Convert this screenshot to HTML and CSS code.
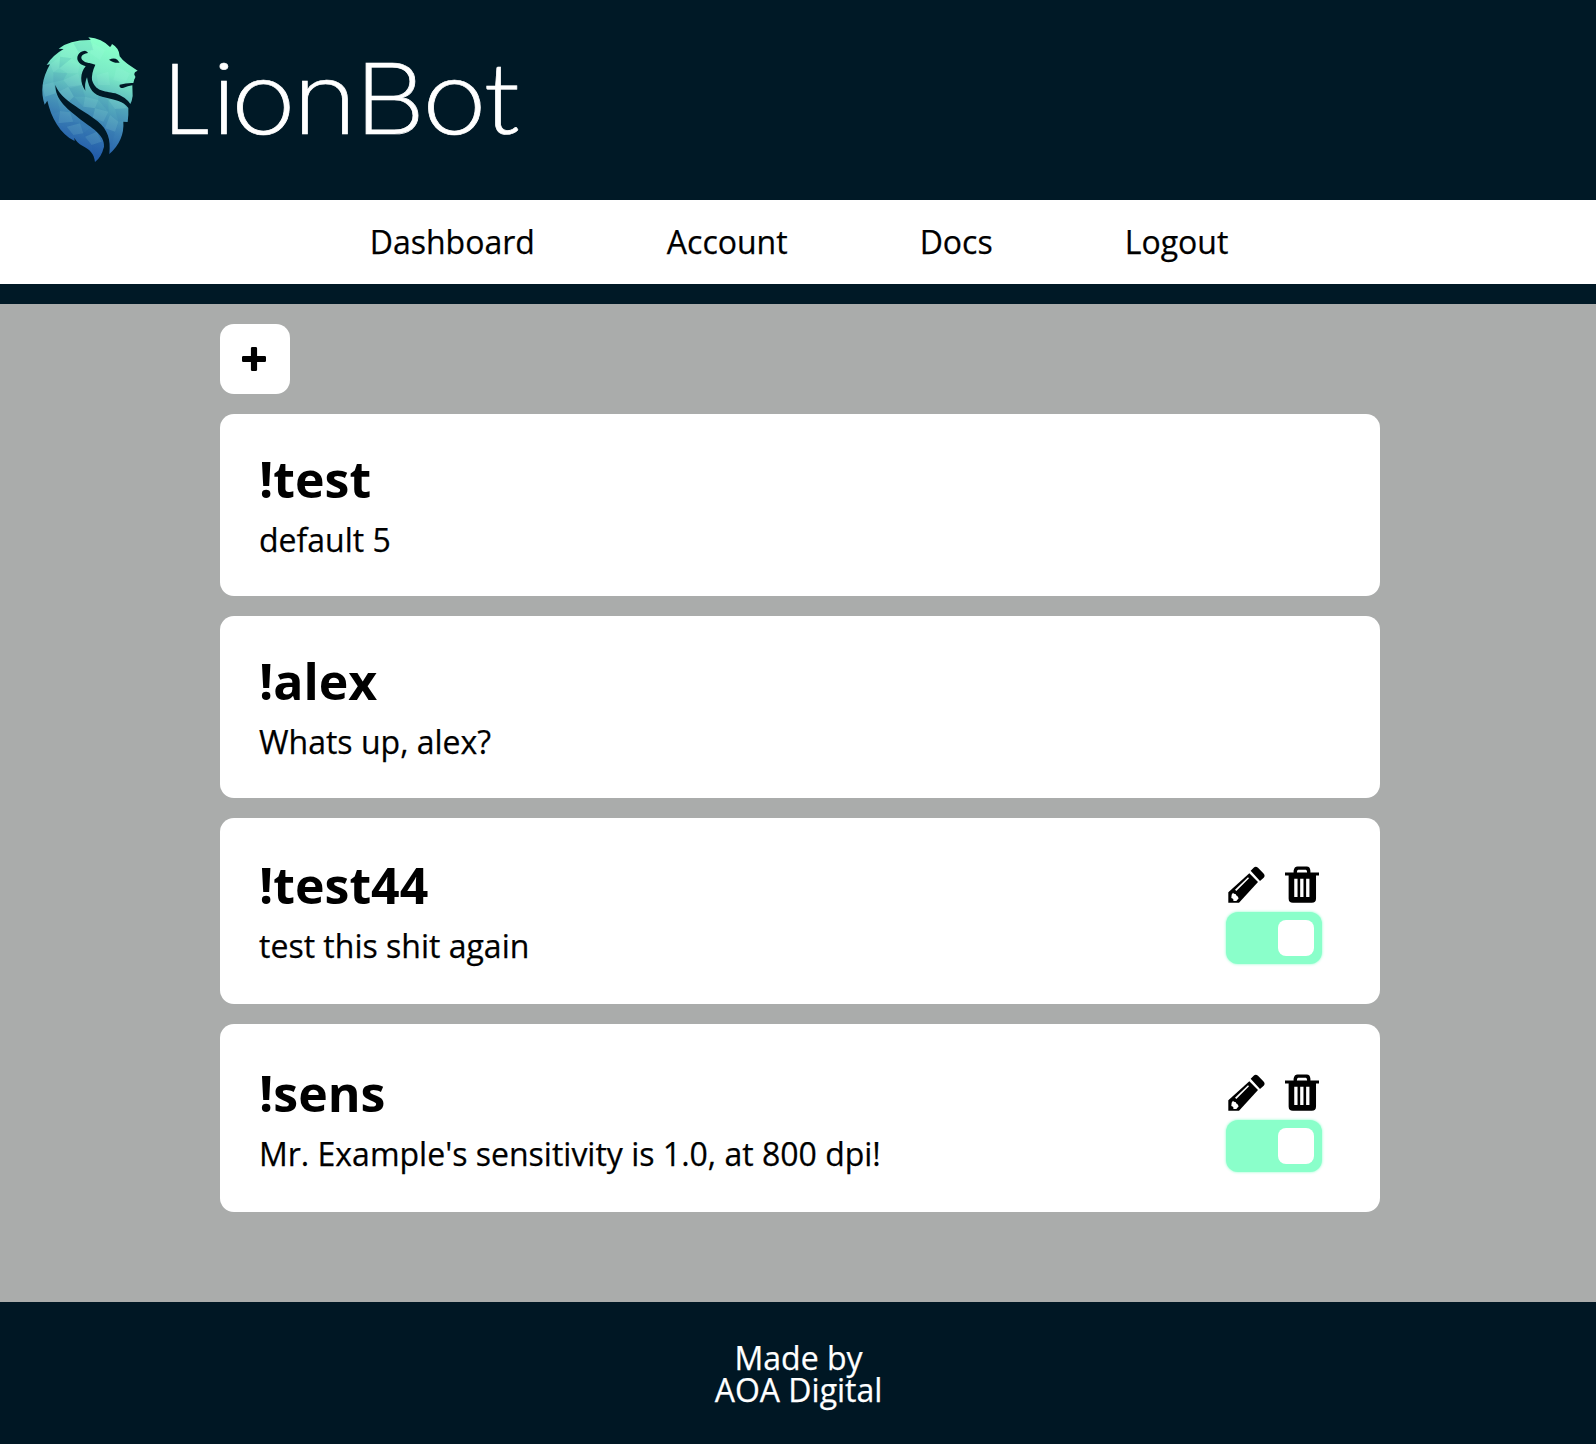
FILE: index.html
```html
<!DOCTYPE html>
<html lang="en">
<head>
<meta charset="utf-8">
<title>LionBot</title>
<link rel="stylesheet" href="styles.css">
</head>
<body>
<svg class="sprite" aria-hidden="true">
  <symbol id="pencil" viewBox="0 0 111 111">
    <path d="M1 79 64 22 90 48 33 110H1z"/>
    <path d="M68 14 77 5q6-6 13 0l16 17q7 7 1 13l-11 10z"/>
    <path class="cut" d="M21 71 60 34l3 3-38 38zM11 86l4-6q3 5 8 4 0 5 5 6l4 7-7 8H16q2-7-6-9z"/>
  </symbol>
  <symbol id="trash" viewBox="0 0 103 111">
    <path fill-rule="evenodd" d="M26 19V14Q28 1 38 1h28q10 0 11 13v5h26v9h-9v70q0 13-13 13H24q-13 0-13-13V28H0v-9zM36 19h31q0-8-4-8H40q-4 0-4 8zM28 38v55h10V38zM46 38v55h10V38zM64 38v55h10V38z"/>
  </symbol>
</svg>

<header class="header">
  <svg class="lion" viewBox="0 0 360 450" aria-hidden="true">
    <defs>
      <linearGradient id="mane" gradientUnits="userSpaceOnUse" x1="230" y1="60" x2="130" y2="370">
        <stop offset="0" stop-color="#88ffca"/>
        <stop offset=".25" stop-color="#7beac6"/>
        <stop offset=".5" stop-color="#58b0bd"/>
        <stop offset=".75" stop-color="#3b80b5"/>
        <stop offset="1" stop-color="#245eab"/>
      </linearGradient>
      <clipPath id="head"><path id="shape" d="M175 37Q216 41 240 66Q243 65 246 57Q268 69 269 94Q276 105 293 117L323 137Q312 140 313 150Q319 155 313 163L310 174Q290 173 269 179Q266 189 279 189Q294 183 307 181L308 213Q306 228 301 237Q287 216 256 205C220 198 197 199 186 165Q184 145 196 119Q186 116 178 114Q166 115 158 106C150 97 154 87 174 84Q173 79 165 77C145 79 138 96 144 108Q150 119 167 124C150 143 149 174 166 197Q163 175 171 157C177 194 191 210 219 216C255 224 281 229 295 249Q296 270 293 291L280 290Q284 346 238 387C243 343 233 314 203 289C156 251 93 227 76 180C76 223 108 249 145 278C184 309 225 328 222 365Q214 397 195 411C193 386 179 373 157 362Q141 354 133 338L134 348C89 326 63 276 52 227L44 239Q24 181 60 118L50 120Q66 92 101 72L86 71Q119 44 182 45Z"/></clipPath>
    </defs>
    <use href="#shape" fill="url(#mane)"/>
    <g clip-path="url(#head)">
      <g fill="#b5fff0" fill-opacity=".11">
        <path d="M95 73 130 55 145 80 125 100 90 95zM60 118 90 95 88 130 70 142zM125 100 148 118 145 145 112 145 88 130zM37 180 70 172 78 205 45 215zM145 145 155 180 120 190 100 165zM78 205 115 185 132 215 105 240zM165 215 205 225 195 250 160 245zM90 258 120 262 130 290 85 295zM195 250 235 260 220 290 188 278zM235 225 270 218 290 250 255 252zM240 270 265 290 255 320 225 310zM110 305 150 295 160 325 130 330zM165 335 200 320 215 350 185 360zM190 55 225 75 210 105 180 85zM200 150 235 140 240 180 205 180zM260 125 300 145 285 175 250 165z"/>
      </g>
      <g fill="#1c55a8" fill-opacity=".09">
        <path d="M130 55 180 42 190 75 145 80zM90 95 125 100 88 130zM70 142 112 145 100 165 70 172zM115 185 155 180 165 215 132 215zM45 215 78 205 90 258 60 270zM132 215 160 245 150 270 105 240zM160 245 195 250 188 278 150 270zM130 290 150 295 110 305 85 295zM150 270 188 278 180 310 150 295zM220 290 225 310 255 320 245 360 220 350zM205 205 235 225 235 260 205 225zM255 252 295 250 295 285 265 290zM80 300 110 305 130 330 100 345zM160 325 180 310 200 320 165 335zM185 360 215 350 225 370 195 410z"/>
      </g>
    </g>
    <path fill="#001926" d="M237 104Q252 97 262 104L269 113Q250 115 237 104Z"/>
  </svg>
  <svg class="wordmark" viewBox="0 0 400 120" role="img" aria-label="LionBot">
    <text class="wordmark-end" x="14.5" y="94" transform="scale(.92 1)">L</text>
    <text class="wordmark-text" x="54 71 125 179.5 238.5" y="94" transform="scale(1.14 1)">ionBo</text>
    <text class="wordmark-end" x="315" y="94" transform="scale(1.06 1)">t</text>
  </svg>
</header>

<nav class="nav">
  <a class="nav-link">Dashboard</a>
  <a class="nav-link">Account</a>
  <a class="nav-link">Docs</a>
  <a class="nav-link">Logout</a>
</nav>

<main class="main">
  <button class="add" aria-label="Add command">
    <svg class="plus" viewBox="0 0 70 70"><path d="M30 0h10q4 0 4 4v22h22q4 0 4 4v10q0 4-4 4H44v22q0 4-4 4H30q-4 0-4-4V44H4q-4 0-4-4V30q0-4 4-4h22V4q0-4 4-4z"/></svg>
  </button>

  <section class="card">
    <div class="command">
      <h2 class="name">!test</h2>
      <p class="reply">default 5</p>
    </div>
  </section>

  <section class="card">
    <div class="command">
      <h2 class="name">!alex</h2>
      <p class="reply">Whats up, alex?</p>
    </div>
  </section>

  <section class="card card-custom">
    <div class="command">
      <h2 class="name">!test44</h2>
      <p class="reply">test this shit again</p>
    </div>
    <div class="actions">
      <div class="icons">
        <svg class="pencil"><use href="#pencil"/></svg>
        <svg class="trash"><use href="#trash"/></svg>
      </div>
      <div class="toggle"><span class="knob"></span></div>
    </div>
  </section>

  <section class="card card-custom card-last">
    <div class="command">
      <h2 class="name">!sens</h2>
      <p class="reply">Mr. Example's sensitivity is 1.0, at 800 dpi!</p>
    </div>
    <div class="actions">
      <div class="icons">
        <svg class="pencil"><use href="#pencil"/></svg>
        <svg class="trash"><use href="#trash"/></svg>
      </div>
      <div class="toggle"><span class="knob"></span></div>
    </div>
  </section>
</main>

<footer class="footer">Made by<br>AOA Digital</footer>
</body>
</html>
```
FILE: styles.css
```css
* {
  box-sizing: border-box;
}

body {
  margin: 0;
  background: #001926;
  color: #000;
  font: 32px/32px "Open Sans", sans-serif;
}

.sprite {
  display: none;
}

.header {
  display: flex;
  height: 200px;
  padding: 25px 30px;
}

.lion {
  width: 120px;
  height: 150px;
}

.wordmark {
  width: 400px;
  height: 120px;
  margin-top: 15px;
}

.wordmark-text,
.wordmark-end {
  fill: #fff;
  stroke: #fff;
  stroke-width: 0.7px;
}

.wordmark-text {
  font-family: Inter, sans-serif;
  font-size: 97px;
  font-weight: 200;
}

.wordmark-end {
  font-family: Lato, sans-serif;
  font-size: 98px;
  font-weight: 300;
}

.nav {
  display: flex;
  justify-content: center;
  gap: 132px;
  height: 84px;
  padding: 26px 0 26px 2px;
  background: #fff;
}

.nav-link,
.reply,
.footer {
  -webkit-text-stroke: 0.25px currentColor;
}

.main {
  display: flex;
  flex-direction: column;
  gap: 20px;
  height: 998px;
  margin-top: 20px;
  padding: 20px 216px 0 220px;
  background: #aaacab;
}

.add {
  display: flex;
  width: 70px;
  height: 70px;
  padding: 23px 0 0 22px;
  border: 0;
  border-radius: 14px;
  background: #fff;
}

.plus {
  width: 24px;
  height: 24px;
}

.card {
  display: flex;
  justify-content: space-between;
  height: 182px;
  padding: 40px 58px 0 39px;
  border-radius: 14px;
  background: #fff;
}

.card-custom {
  height: 186px;
  padding-top: 42px;
}

.card-last {
  height: 188px;
  padding-top: 44px;
}

.name {
  margin: 0 0 20px;
  font-size: 50px;
  line-height: 50px;
  font-weight: 700;
}

.reply {
  margin: 0;
}

.actions {
  width: 96px;
  padding-top: 6px;
}

.icons {
  display: flex;
  gap: 19.5px;
  height: 46px;
  padding-left: 2px;
}

.pencil {
  width: 37px;
  height: 37px;
}

.trash {
  width: 34px;
  height: 37px;
}

.cut {
  fill: #fff;
}

.toggle {
  display: flex;
  justify-content: flex-end;
  width: 96px;
  height: 52px;
  padding: 8px;
  border-radius: 12px;
  background: #8affca;
  box-shadow: 0 0 3px #8affca;
}

.knob {
  width: 36px;
  height: 36px;
  border-radius: 8px;
  background: #fff;
}

.footer {
  height: 142px;
  padding: 40px 0 0 1px;
  background: #001724;
  color: #fff;
  text-align: center;
}
```
